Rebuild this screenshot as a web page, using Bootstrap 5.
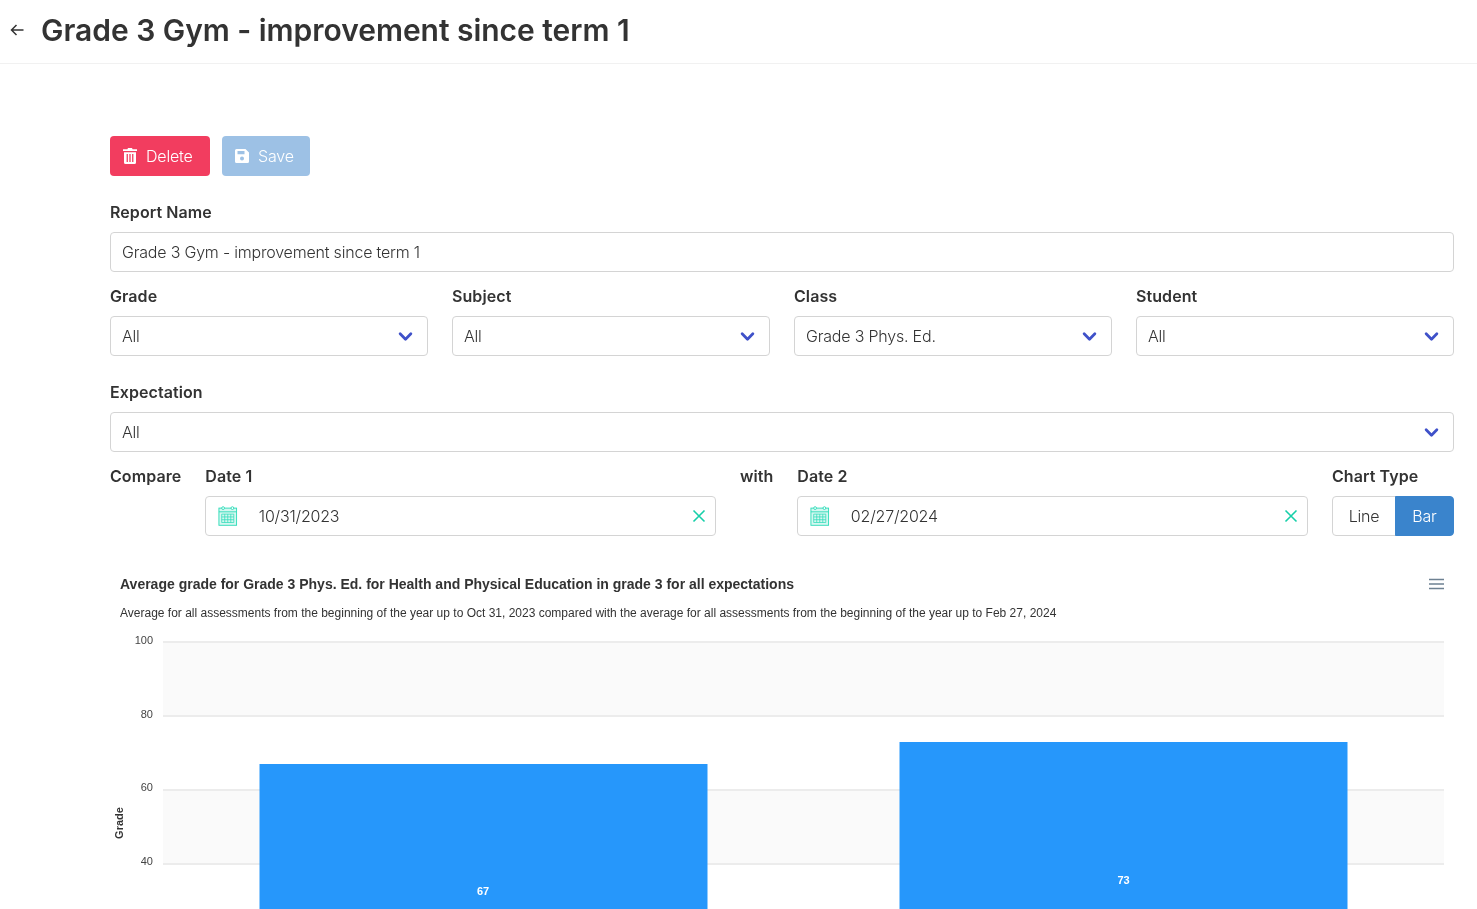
<!DOCTYPE html>
<html lang="en">
<head>
  <meta charset="UTF-8">
  <meta name="viewport" content="width=device-width, initial-scale=1.0">
  <title>Grade 3 Gym - improvement since term 1</title>
  <link rel="stylesheet" href="https://cdn.jsdelivr.net/npm/bootstrap@5.3.0/dist/css/bootstrap.min.css" />
  <style>
    html, body { height: 909px; overflow: hidden; }
    body { font-family: Inter, "Liberation Sans", sans-serif; color: #333; background: #fff; }
    .pageHeader { height: 64px; border-bottom: 1px solid #f1f1f1; padding: 0 0 4px 9px; gap: 16px; will-change: transform; }
    .pageTitle { font-size: 30px; font-weight: 600; margin: 0; color: #333; line-height: 1; letter-spacing: -.03px; }
    .pageBody { padding: 72px 23px 0 110px; will-change: transform; }
    .actionRow { gap: 12px; margin-bottom: 24px; }
    .actionBtn { height: 40px; font-size: 16px; font-weight: 300; letter-spacing: -.2px; border: 0; border-radius: 4px; color: #fff; padding: 0 0 0 13px; gap: 9px; }
    .btnDelete, .btnDelete:hover { background: #f23d5f; color: #fff; width: 100px; }
    .btnSave:disabled { background: #9dc1e5; color: #fff; opacity: 1; width: 88px; }
    .fieldLabel { font-weight: 600; font-size: 16px; letter-spacing: .08px; line-height: 24px; margin-bottom: 8px; color: #333; display: block; }
    .form-control, .form-select { height: 40px; font-size: 16px; font-weight: 300; letter-spacing: -.2px; color: #333; border-color: #d4d4d4; border-radius: 4px; padding: 0 11px; }
    .form-select {
      background-image: url("data:image/svg+xml,%3csvg xmlns='http://www.w3.org/2000/svg' viewBox='0 0 14 10'%3e%3cpath fill='none' stroke='%233f51c9' stroke-width='2.6' stroke-linecap='round' stroke-linejoin='round' d='M2 2.5l5 5 5-5'/%3e%3c/svg%3e");
      background-position: right 14px center;
      background-size: 15px 11px;
    }
    .nameField { margin-bottom: 12px; }
    .filterRow { margin-bottom: 24px; }
    .dateCol { flex: 1 1 0; min-width: 0; }
    .dateBox { height: 40px; border: 1px solid #d4d4d4; border-radius: 4px; padding: 0 9px 0 12px; }
    .dateBox input { border: 0; height: 36px; padding: 0 0 0 21px; box-shadow: none; }
    .typeGroup { width: 122px; }
    .typeGroup .btn { height: 40px; font-size: 16px; font-weight: 300; letter-spacing: -.2px; color: #333; background: #fff; border: 1px solid #d4d4d4; border-radius: 4px 0 0 4px; padding: 0; flex: 0 0 64px; }
    .typeGroup .btn.chosen { background: #3a84cc; border-color: #3a84cc; color: #fff; border-radius: 0 4px 4px 0; flex: 0 0 59px; }
    .chartWrap { display: block; margin: 24px 0 0; }
    .chartWrap text { font-family: "Liberation Sans", Arial, sans-serif; fill: #333; }
    .compareRow { gap: 24px; margin-top: 12px; }
    .grid-line { stroke: #ececec; stroke-width: 2; }
    .tick { font-size: 11px; text-anchor: end; }
    .chartWrap text.tick { fill: #444; }
    .chartWrap text.barValue { fill: #fff; font-size: 11px; font-weight: 700; text-anchor: middle; }
  </style>
</head>
<body>
  <header class="pageHeader d-flex align-items-center">
    <svg width="16" height="16" viewBox="0 0 16 16" fill="none" stroke="#333" stroke-width="1.5"><path d="M14.5 8H2.5M7.5 3l-5 5 5 5"/></svg>
    <h1 class="pageTitle">Grade 3 Gym - improvement since term 1</h1>
  </header>

  <main class="pageBody">
    <div class="d-flex actionRow">
      <button type="button" class="btn actionBtn btnDelete d-flex align-items-center">
        <svg width="14" height="16" viewBox="0 0 14 16" fill="#fff"><path d="M5 0h4l.6 1.3H14v1.8H0V1.3h4.400zM1 4.200h12V14.500A1.500 1.500 0 0 1 11.500 16h-9A1.500 1.500 0 0 1 1 14.500zM3.600 6v8h1.300V6zM6.350 6v8h1.300V6zM9.100 6v8h1.300V6z" fill-rule="evenodd"/></svg>
        Delete
      </button>
      <button type="button" class="btn actionBtn btnSave d-flex align-items-center" disabled>
        <svg width="14" height="14" viewBox="0 0 14 14"><path fill="#fff" fill-rule="evenodd" d="M1.500 0H10.500L14 3.500V12.500A1.500 1.500 0 0 1 12.500 14H1.500A1.500 1.500 0 0 1 0 12.500V1.500A1.500 1.500 0 0 1 1.500 0zM2.500 2v3.200H9.500V2zM7 7.500a2 2 0 1 0 0 4 2 2 0 0 0 0-4z"/></svg>
        Save
      </button>
    </div>

    <label class="fieldLabel" for="reportName">Report Name</label>
    <input type="text" class="form-control nameField" id="reportName" value="Grade 3 Gym - improvement since term 1">

    <div class="row gx-4 filterRow">
      <div class="col-3">
        <label class="fieldLabel" for="gradeSel">Grade</label>
        <select class="form-select" id="gradeSel"><option>All</option></select>
      </div>
      <div class="col-3">
        <label class="fieldLabel" for="subjectSel">Subject</label>
        <select class="form-select" id="subjectSel"><option>All</option></select>
      </div>
      <div class="col-3">
        <label class="fieldLabel" for="classSel">Class</label>
        <select class="form-select" id="classSel"><option>Grade 3 Phys. Ed.</option></select>
      </div>
      <div class="col-3">
        <label class="fieldLabel" for="studentSel">Student</label>
        <select class="form-select" id="studentSel"><option>All</option></select>
      </div>
    </div>

    <div class="expectBlock">
      <label class="fieldLabel" for="expectSel">Expectation</label>
      <select class="form-select" id="expectSel"><option>All</option></select>
    </div>

    <div class="d-flex compareRow">
      <div><span class="fieldLabel">Compare</span></div>
      <div class="dateCol">
        <span class="fieldLabel">Date 1</span>
        <div class="dateBox d-flex align-items-center">
          <svg width="21" height="22" viewBox="0 0 21 22" fill="none" stroke="#2fdcb9"><rect x="1" y="2.500" width="19" height="18.500" fill="#d5f7f0"/><path d="M1 6.500h19"/><circle cx="5.500" cy="2.500" r="1.500" fill="#fff"/><circle cx="15.500" cy="2.500" r="1.500" fill="#fff"/><path stroke-width=".8" d="M4 9h13v9H4zM4 12h13M4 15h13M7.250 9v9M10.500 9v9M13.750 9v9"/></svg>
          <input type="text" class="form-control" value="10/31/2023">
          <svg class="flex-shrink-0" width="14" height="14" viewBox="0 0 14 14" stroke="#17cfa9" stroke-width="1.600"><path d="M1.500 1.500l11 11M12.500 1.500l-11 11"/></svg>
        </div>
      </div>
      <div><span class="fieldLabel">with</span></div>
      <div class="dateCol">
        <span class="fieldLabel">Date 2</span>
        <div class="dateBox d-flex align-items-center">
          <svg width="21" height="22" viewBox="0 0 21 22" fill="none" stroke="#2fdcb9"><rect x="1" y="2.500" width="19" height="18.500" fill="#d5f7f0"/><path d="M1 6.500h19"/><circle cx="5.500" cy="2.500" r="1.500" fill="#fff"/><circle cx="15.500" cy="2.500" r="1.500" fill="#fff"/><path stroke-width=".8" d="M4 9h13v9H4zM4 12h13M4 15h13M7.250 9v9M10.500 9v9M13.750 9v9"/></svg>
          <input type="text" class="form-control" value="02/27/2024">
          <svg class="flex-shrink-0" width="14" height="14" viewBox="0 0 14 14" stroke="#17cfa9" stroke-width="1.600"><path d="M1.500 1.500l11 11M12.500 1.500l-11 11"/></svg>
        </div>
      </div>
      <div>
        <span class="fieldLabel">Chart Type</span>
        <div class="btn-group typeGroup d-flex">
          <button type="button" class="btn">Line</button>
          <button type="button" class="btn chosen">Bar</button>
        </div>
      </div>
    </div>

    <!-- svg coords: origin at page x 110, y 560 -->
    <svg class="chartWrap" width="1344" height="349" viewBox="0 0 1344 349">
      <text x="10" y="29" font-size="14" font-weight="700">Average grade for Grade 3 Phys. Ed. for Health and Physical Education in grade 3 for all expectations</text>
      <text x="10" y="57" font-size="12">Average for all assessments from the beginning of the year up to Oct 31, 2023 compared with the average for all assessments from the beginning of the year up to Feb 27, 2024</text>
      <path d="M1319 19.500h15M1319 24h15M1319 28.500h15" stroke="#6e8192" stroke-width="1.500"/>

      <rect x="53" y="82" width="1281" height="74" fill="#fafafa"/>
      <rect x="53" y="230" width="1281" height="74" fill="#fafafa"/>
      <path class="grid-line" d="M53 82h1281M53 156h1281M53 230h1281M53 304h1281"/>

      <text class="tick" x="43" y="84">100</text>
      <text class="tick" x="43" y="158">80</text>
      <text class="tick" x="43" y="231">60</text>
      <text class="tick" x="43" y="305">40</text>
      <text x="13" y="263" font-size="11" font-weight="700" text-anchor="middle" transform="rotate(-90 13 263)">Grade</text>

      <rect x="149.500" y="204" width="448" height="145" fill="#2697fb"/>
      <rect x="789.500" y="182" width="448" height="167" fill="#2697fb"/>
      <text class="barValue" x="373" y="335">67</text>
      <text class="barValue" x="1013.500" y="324">73</text>
    </svg>
  </main>

  <script src="https://cdn.jsdelivr.net/npm/bootstrap@5.3.0/dist/js/bootstrap.bundle.min.js"></script>
</body>
</html>
